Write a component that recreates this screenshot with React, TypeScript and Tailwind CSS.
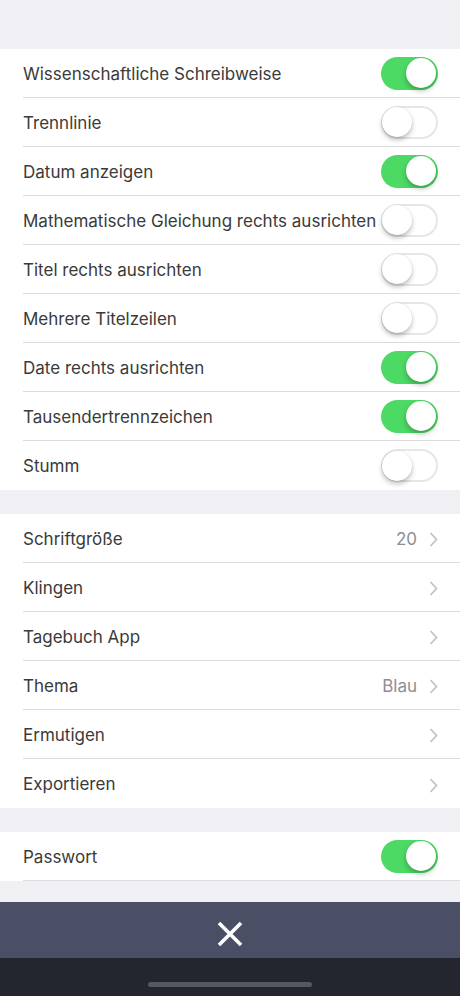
type Item = { label: string; on?: boolean; value?: string; link?: boolean };

const toggles: Item[] = [
  { label: 'Wissenschaftliche Schreibweise', on: true },
  { label: 'Trennlinie', on: false },
  { label: 'Datum anzeigen', on: true },
  { label: 'Mathematische Gleichung rechts ausrichten', on: false },
  { label: 'Titel rechts ausrichten', on: false },
  { label: 'Mehrere Titelzeilen', on: false },
  { label: 'Date rechts ausrichten', on: true },
  { label: 'Tausendertrennzeichen', on: true },
  { label: 'Stumm', on: false },
];

const links: Item[] = [
  { label: 'Schriftgröße', value: '20', link: true },
  { label: 'Klingen', link: true },
  { label: 'Tagebuch App', link: true },
  { label: 'Thema', value: 'Blau', link: true },
  { label: 'Ermutigen', link: true },
  { label: 'Exportieren', link: true },
];

function Switch({ on }: { on: boolean }) {
  return (
    <div
      className={`relative h-[33px] w-[57px] shrink-0 rounded-full ${
        on ? 'bg-[#4cd964]' : 'border-2 border-[#e6e6e8] bg-white'
      }`}
    >
      <div
        className={`absolute top-1/2 h-[30px] w-[30px] -translate-y-1/2 rounded-full bg-white shadow-[0_3px_5px_rgba(0,0,0,0.25),0_0_0_0.5px_rgba(0,0,0,0.06)] ${
          on ? 'right-[2px]' : 'left-[-1px]'
        }`}
      />
    </div>
  );
}

function Chevron() {
  return (
    <svg width="9" height="15" viewBox="0 0 9 15" fill="none" stroke="#c4c4c8" strokeWidth="1.8">
      <path d="M1.5 1L7.5 7.5L1.5 14" />
    </svg>
  );
}

function Row({ item, last }: { item: Item; last: boolean }) {
  return (
    <div className="pl-[23px]">
      <div
        className={`flex h-[49px] items-center pr-[22px] pt-[3px] ${
          last ? '' : 'border-b border-[#dcdcdf]'
        }`}
      >
        <span className="min-w-0 flex-1 whitespace-nowrap text-[17px] text-[#3a3a3a]">{item.label}</span>
        {item.link ? (
          <div className="flex items-center gap-[12px]">
            {item.value && <span className="text-[17px] text-[#8e8e93]">{item.value}</span>}
            <Chevron />
          </div>
        ) : (
          <div className="-mt-[3px] shrink-0">
            <Switch on={!!item.on} />
          </div>
        )}
      </div>
    </div>
  );
}

export default function App() {
  return (
    <div
      className="flex h-[996px] w-[460px] flex-col bg-[#efeff4]"
      style={{ fontFamily: 'Inter, "Liberation Sans", Arial, sans-serif' }}
    >
      <div className="h-[49px]" />
      <div className="bg-white">
        {toggles.map((t, i) => (
          <Row key={t.label} item={t} last={i === toggles.length - 1} />
        ))}
      </div>
      <div className="h-[24px]" />
      <div className="bg-white">
        {links.map((t, i) => (
          <Row key={t.label} item={t} last={i === links.length - 1} />
        ))}
      </div>
      <div className="h-[24px]" />
      <div className="bg-white">
        <Row item={{ label: 'Passwort', on: true }} last={false} />
      </div>
      <div className="flex-1" />
      <div className="flex h-[56px] items-center justify-center bg-[#4a4f65] pt-[8px]">
        <svg width="26" height="26" viewBox="0 0 26 26" stroke="white" strokeWidth="3.6" strokeLinecap="butt">
          <path d="M2 2L24 24M24 2L2 24" />
        </svg>
      </div>
      <div className="flex h-[38px] items-end justify-center bg-[#24262f] pb-[9px]">
        <div className="h-[5px] w-[164px] rounded-full bg-[#55585f]" />
      </div>
    </div>
  );
}
